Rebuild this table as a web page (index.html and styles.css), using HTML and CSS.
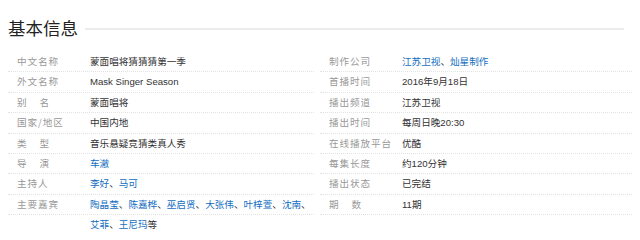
FILE: index.html
```html
<!DOCTYPE html>
<html lang="zh-CN">
<head>
<meta charset="utf-8">
<link rel="stylesheet" href="styles.css">
</head>
<body>
<div class="card">
  <div class="head">
    <h2 class="title">基本信息</h2>
    <div class="rule"></div>
  </div>
  <div class="cols">
    <dl class="col col-left">
      <div class="row"><dt class="lbl">中文名称</dt><dd class="val">蒙面唱将猜猜猜第一季</dd></div>
      <div class="row"><dt class="lbl">外文名称</dt><dd class="val">Mask Singer Season</dd></div>
      <div class="row"><dt class="lbl lbl-2">别<span class="sp"></span>名</dt><dd class="val">蒙面唱将</dd></div>
      <div class="row"><dt class="lbl">国家/地区</dt><dd class="val">中国内地</dd></div>
      <div class="row"><dt class="lbl lbl-2">类<span class="sp"></span>型</dt><dd class="val">音乐悬疑竞猜类真人秀</dd></div>
      <div class="row"><dt class="lbl lbl-2">导<span class="sp"></span>演</dt><dd class="val"><a class="lnk">车澈</a></dd></div>
      <div class="row"><dt class="lbl">主持人</dt><dd class="val"><a class="lnk">李好</a>、<a class="lnk">马可</a></dd></div>
      <div class="row"><dt class="lbl">主要嘉宾</dt><dd class="val"><a class="lnk">陶晶莹</a>、<a class="lnk">陈嘉桦</a>、<a class="lnk">巫启贤</a>、<a class="lnk">大张伟</a>、<a class="lnk">叶梓萱</a>、<a class="lnk">沈南</a>、</dd></div>
      <div class="row row-last"><dt class="lbl"></dt><dd class="val"><a class="lnk">艾菲</a>、<a class="lnk">王尼玛</a>等</dd></div>
    </dl>
    <dl class="col col-right">
      <div class="row"><dt class="lbl">制作公司</dt><dd class="val"><a class="lnk">江苏卫视</a>、<a class="lnk">灿星制作</a></dd></div>
      <div class="row"><dt class="lbl">首播时间</dt><dd class="val">2016年9月18日</dd></div>
      <div class="row"><dt class="lbl">播出频道</dt><dd class="val">江苏卫视</dd></div>
      <div class="row"><dt class="lbl">播出时间</dt><dd class="val">每周日晚20:30</dd></div>
      <div class="row"><dt class="lbl">在线播放平台</dt><dd class="val">优酷</dd></div>
      <div class="row"><dt class="lbl">每集长度</dt><dd class="val">约120分钟</dd></div>
      <div class="row"><dt class="lbl">播出状态</dt><dd class="val">已完结</dd></div>
      <div class="row"><dt class="lbl lbl-2">期<span class="sp"></span>数</dt><dd class="val">11期</dd></div>
    </dl>
  </div>
</div>
</body>
</html>
```
FILE: styles.css
```css
html, body {
  margin: 0;
  padding: 0;
  background: #ffffff;
}
body {
  font-family: "Liberation Sans", Arial, "Noto Sans CJK SC", sans-serif;
  color: #333333;
}
.card {
  padding: 16px 8px 0 8px;
}
.head {
  display: flex;
  align-items: center;
  height: 24px;
  margin-bottom: 12px;
}
.title {
  margin: 0;
  font-family: "Noto Sans CJK SC", sans-serif;
  font-weight: normal;
  font-size: 17.5px;
  line-height: 24px;
  color: #222222;
  padding-right: 7px;
}
.rule {
  flex: 1;
  height: 2px;
  background: #ededed;
  margin-right: 8px;
  margin-top: 1px;
}
.cols {
  display: grid;
  grid-template-columns: 306px 312px;
  column-gap: 6px;
}
.col {
  margin: 0;
}
.row {
  display: flex;
  height: 19.4px;
  border-bottom: 1px dotted #e2e2e2;
  font-size: 9.6px;
  line-height: 19.4px;
}
.row-last {
  border-bottom: none;
}
.lbl {
  width: 73px;
  padding-left: 9px;
  flex: none;
  color: #999999;
  letter-spacing: 0.9px;
  font-family: "Noto Sans CJK SC", sans-serif;
  white-space: nowrap;
}
.lbl .sp {
  display: inline-block;
  width: 12px;
}
.val {
  margin: 0;
  color: #333333;
  white-space: nowrap;
  font-family: "Liberation Sans", "Noto Sans CJK SC", sans-serif;
}
.lnk {
  color: #136ec2;
  text-decoration: none;
}
```
